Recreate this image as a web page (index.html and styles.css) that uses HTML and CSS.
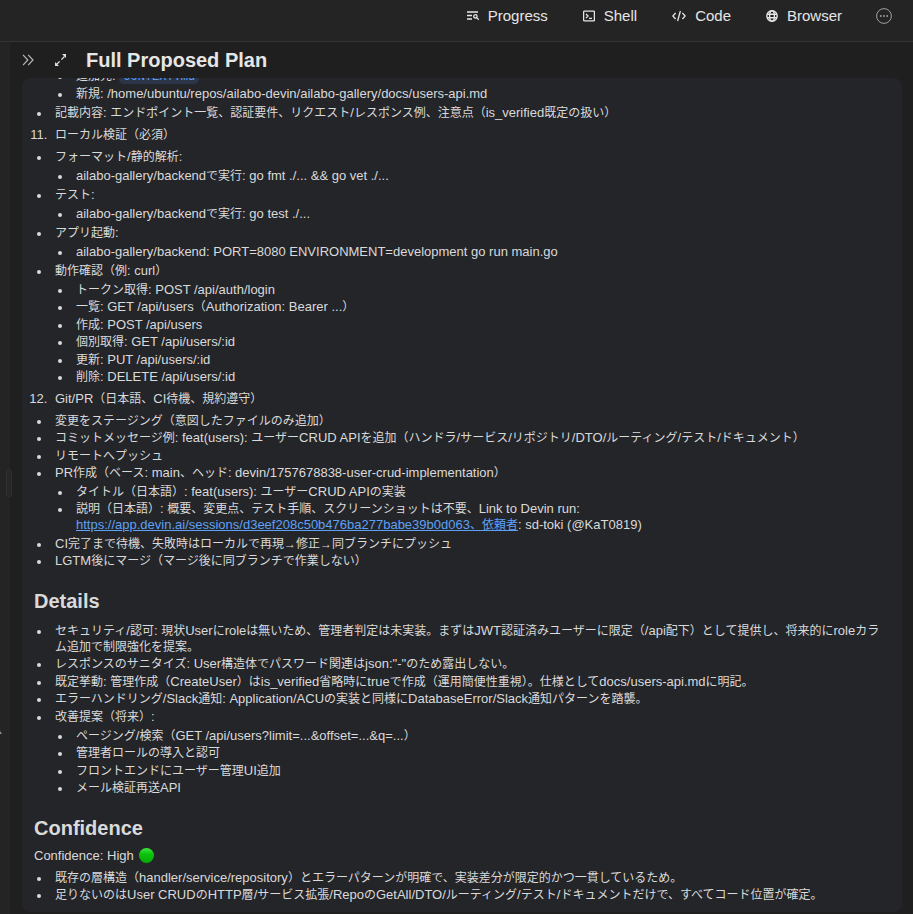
FILE: index.html
```
<!DOCTYPE html>
<html lang="ja">
<head>
<meta charset="utf-8">
<meta name="viewport" content="width=device-width, initial-scale=1">
<title>Full Proposed Plan</title>
<link rel="stylesheet" href="styles.css">
</head>
<body>
<header class="topbar">
  <nav class="tabs">
    <button class="tab" type="button">
      <svg class="icon" viewBox="0 0 12 12" fill="none" stroke="currentColor" stroke-width="1.3"><path d="M0 2H11M0 5.5H5M0 9H5"/><circle cx="8.4" cy="6.3" r="1.7"/><path d="M9.6 7.6 11.8 9.8"/></svg>
      Progress
    </button>
    <button class="tab" type="button">
      <svg class="icon" viewBox="0 0 12 12" fill="none" stroke="currentColor" stroke-width="1.3"><rect x=".6" y="1.2" width="10.8" height="9.6" rx=".6"/><path d="M3 4 5 6 3 8M6 8.3H9"/></svg>
      Shell
    </button>
    <button class="tab" type="button">
      <svg class="icon wide" viewBox="0 0 14 12" fill="none" stroke="currentColor" stroke-width="1.3"><path d="M3.6 3 .8 6 3.6 9M10.4 3 13.2 6 10.4 9M8.4 1 5.6 11"/></svg>
      Code
    </button>
    <button class="tab" type="button">
      <svg class="icon" viewBox="0 0 12 12" fill="none" stroke="currentColor" stroke-width="1.4"><circle cx="6" cy="6" r="5.2"/><ellipse cx="6" cy="6" rx="2.4" ry="5.2"/><path d="M1 4.2H11M1 7.8H11"/></svg>
      Browser
    </button>
  </nav>
  <button class="more" type="button" aria-label="More">
    <svg viewBox="0 0 16 16" fill="none" stroke="currentColor"><circle cx="8" cy="8" r="7.4"/><g fill="currentColor" stroke="none"><circle cx="4.8" cy="8" r=".9"/><circle cx="8" cy="8" r=".9"/><circle cx="11.2" cy="8" r=".9"/></g></svg>
  </button>
</header>
<div class="workspace">
  <div class="gutter">
    <span class="notch"></span>
    <span class="handle"></span>
  </div>
  <main class="panel">
    <div class="panel-head">
      <button class="tool" type="button" aria-label="Collapse">
        <svg viewBox="0 0 14 14" fill="none" stroke="currentColor" stroke-width="1.2"><path d="M1 1.8 5.8 7 1 12.2M6.2 1.8 11 7 6.2 12.2"/></svg>
      </button>
      <button class="tool expand" type="button" aria-label="Expand">
        <svg viewBox="0 0 14 14" fill="none" stroke="currentColor" stroke-width="1.3"><path d="M7.4 6.6 10.5 3.5M5.6 8.4 2.5 11.5"/><path fill="currentColor" stroke="none" d="M8 1H12V5ZM1 9V13H5Z"/></svg>
      </button>
      <h1>Full Proposed Plan</h1>
    </div>
    <div class="card">
      <article class="plan">
        <ul>
          <li class="nest">
            <ul>
              <li>追加先<span lang="en">: </span><code>CONTEXT.md</code></li>
              <li>新規<span lang="en">: /home/ubuntu/repos/ailabo-devin/ailabo-gallery/docs/users-api.md</span></li>
            </ul>
          </li>
          <li>記載内容<span lang="en">: </span>エンドポイント一覧、認証要件、リクエスト<span lang="en">/</span>レスポンス例、注意点（<span lang="en">is_verified</span>既定の扱い）</li>
        </ul>
        <ol start="11"><li>ローカル検証（必須）</li></ol>
        <ul>
          <li>フォーマット<span lang="en">/</span>静的解析<span lang="en">:</span>
            <ul><li><span lang="en">ailabo-gallery/backend</span>で実行<span lang="en">: go fmt ./... &amp;&amp; go vet ./...</span></li></ul>
          </li>
          <li>テスト<span lang="en">:</span>
            <ul><li><span lang="en">ailabo-gallery/backend</span>で実行<span lang="en">: go test ./...</span></li></ul>
          </li>
          <li>アプリ起動<span lang="en">:</span>
            <ul><li><span lang="en">ailabo-gallery/backend: PORT=8080 ENVIRONMENT=development go run main.go</span></li></ul>
          </li>
          <li>動作確認（例<span lang="en">: curl</span>）
            <ul>
              <li>トークン取得<span lang="en">: POST /api/auth/login</span></li>
              <li>一覧<span lang="en">: GET /api/users</span>（<span lang="en">Authorization: Bearer ...</span>）</li>
              <li>作成<span lang="en">: POST /api/users</span></li>
              <li>個別取得<span lang="en">: GET /api/users/:id</span></li>
              <li>更新<span lang="en">: PUT /api/users/:id</span></li>
              <li>削除<span lang="en">: DELETE /api/users/:id</span></li>
            </ul>
          </li>
        </ul>
        <ol start="12"><li><span lang="en">Git/PR</span>（日本語、<span lang="en">CI</span>待機、規約遵守）</li></ol>
        <ul>
          <li>変更をステージング（意図したファイルのみ追加）</li>
          <li>コミットメッセージ例<span lang="en">: feat(users): </span>ユーザー<span lang="en">CRUD API</span>を追加（ハンドラ<span lang="en">/</span>サービス<span lang="en">/</span>リポジトリ<span lang="en">/DTO/</span>ルーティング<span lang="en">/</span>テスト<span lang="en">/</span>ドキュメント）</li>
          <li>リモートへプッシュ</li>
          <li><span lang="en">PR</span>作成（ベース<span lang="en">: main</span>、ヘッド<span lang="en">: devin/1757678838-user-crud-implementation</span>）
            <ul>
              <li>タイトル（日本語）<span lang="en">: feat(users): </span>ユーザー<span lang="en">CRUD API</span>の実装</li>
              <li>説明（日本語）<span lang="en">: </span>概要、変更点、テスト手順、スクリーンショットは不要、<span lang="en">Link to Devin run: </span><a href="https://app.devin.ai/sessions/d3eef208c50b476ba277babe39b0d063"><span lang="en">https://app.devin.ai/sessions/d3eef208c50b476ba277babe39b0d063</span>、依頼者</a><span lang="en">: sd-toki (@KaT0819)</span></li>
            </ul>
          </li>
          <li><span lang="en">CI</span>完了まで待機、失敗時はローカルで再現→修正→同ブランチにプッシュ</li>
          <li><span lang="en">LGTM</span>後にマージ（マージ後に同ブランチで作業しない）</li>
        </ul>
        <h2>Details</h2>
        <ul>
          <li>セキュリティ<span lang="en">/</span>認可<span lang="en">: </span>現状<span lang="en">User</span>に<span lang="en">role</span>は無いため、管理者判定は未実装。まずは<span lang="en">JWT</span>認証済みユーザーに限定（<span lang="en">/api</span>配下）として提供し、将来的に<span lang="en">role</span>カラム追加で制限強化を提案。</li>
          <li>レスポンスのサニタイズ<span lang="en">: User</span>構造体でパスワード関連は<span lang="en">json:"-"</span>のため露出しない。</li>
          <li>既定挙動<span lang="en">: </span>管理作成（<span lang="en">CreateUser</span>）は<span lang="en">is_verified</span>省略時に<span lang="en">true</span>で作成（運用簡便性重視）。仕様として<span lang="en">docs/users-api.md</span>に明記。</li>
          <li>エラーハンドリング<span lang="en">/Slack</span>通知<span lang="en">: Application/ACU</span>の実装と同様に<span lang="en">DatabaseError/Slack</span>通知パターンを踏襲。</li>
          <li>改善提案（将来）<span lang="en">:</span>
            <ul>
              <li>ページング<span lang="en">/</span>検索（<span lang="en">GET /api/users?limit=...&amp;offset=...&amp;q=...</span>）</li>
              <li>管理者ロールの導入と認可</li>
              <li>フロントエンドにユーザー管理<span lang="en">UI</span>追加</li>
              <li>メール検証再送<span lang="en">API</span></li>
            </ul>
          </li>
        </ul>
        <h2>Confidence</h2>
        <p><span lang="en">Confidence: High </span><span class="status" role="img" aria-label="green"></span></p>
        <ul>
          <li>既存の層構造（<span lang="en">handler/service/repository</span>）とエラーパターンが明確で、実装差分が限定的かつ一貫しているため。</li>
          <li>足りないのは<span lang="en">User CRUD</span>の<span lang="en">HTTP</span>層<span lang="en">/</span>サービス拡張<span lang="en">/Repo</span>の<span lang="en">GetAll/DTO/</span>ルーティング<span lang="en">/</span>テスト<span lang="en">/</span>ドキュメントだけで、すべてコード位置が確定。</li>
        </ul>
      </article>
    </div>
  </main>
</div>
</body>
</html>
```
FILE: styles.css
```
* { box-sizing: border-box; }

body {
  margin: 0;
  height: 100vh;
  display: flex;
  flex-direction: column;
  overflow: hidden;
  background: #1f1f1f;
  color: #dadada;
  font: 12px/16px "Liberation Sans", "Noto Sans CJK JP", sans-serif;
}

[lang="en"] {
  font-size: 13px;
  line-height: 12px;
}

button {
  border: 0;
  padding: 0;
  background: none;
  color: inherit;
  font: inherit;
  cursor: pointer;
}

svg { display: block; }

.topbar {
  flex: none;
  display: flex;
  justify-content: flex-end;
  align-items: center;
  gap: 34px;
  height: 42px;
  padding: 0 21px 10px 0;
  background: #242424;
  border-bottom: 1px solid #353535;
}

.tabs { display: flex; gap: 35px; }

.tab {
  display: flex;
  align-items: center;
  gap: 9px;
  font-size: 15px;
  line-height: 20px;
  color: #e6e6e6;
}

.icon { width: 12px; height: 12px; }
.icon.wide { width: 14px; }

.more { color: #a0a0a0; }
.more svg { width: 16px; height: 16px; }

.workspace { flex: 1; min-height: 0; display: flex; }

.gutter {
  position: relative;
  flex: none;
  width: 10px;
  background: #242424;
}

.handle {
  position: absolute;
  right: -2px;
  top: 427px;
  width: 6px;
  height: 28px;
  border: 1px solid #303030;
  border-radius: 3px;
  background: #272727;
}

.notch {
  position: absolute;
  left: 0;
  top: 689px;
  border-left: 2px solid #8a9490;
  border-top: 3px solid transparent;
}

.panel {
  flex: 1;
  min-width: 0;
  display: flex;
  flex-direction: column;
  padding: 0 11px 2px 12px;
}

.panel-head {
  flex: none;
  display: flex;
  align-items: center;
  gap: 18px;
  height: 36px;
}

.tool { color: #b8b8b8; }
.tool svg { width: 14px; height: 14px; }
.expand { color: #e0e0e0; }

h1, h2 {
  margin: 0;
  font-weight: 700;
  font-size: 20px;
  line-height: 24px;
}

h1 { color: #e6e6e6; }

.card {
  flex: 1;
  min-height: 0;
  overflow: hidden;
  padding: 0 12px;
  border-radius: 8px;
  background: #242529;
}

.plan { margin-top: -13px; }

ul, ol { margin: 0; padding-left: 17px; }
ol { margin: 6px 0; }
li { margin-top: 1px; padding-left: 4px; }
li:nth-child(odd) { margin-top: 2px; }
ul > li:first-child, ol > li { margin-top: 0; }
li ul { margin: 3px 0; list-style: disc; }
.nest { list-style: none; }

ol > li::marker { font-size: 13px; }

code {
  padding: 0 4px;
  border-radius: 5px;
  background: #2b3547;
  color: #5c9dff;
  font: 12px/16px "Liberation Mono", monospace;
}

a { color: #5ea1f5; word-break: keep-all; }

h2 { margin: 20px 0 8px; }
h2 + ul { padding-top: 2px; }
p { margin: 0 0 6px; }

.status {
  display: inline-block;
  width: 15px;
  height: 15px;
  margin-left: 2px;
  vertical-align: -3px;
  border-radius: 50%;
  background: linear-gradient(#3fe83f, #0cc40c 40%, #06a806);
}
```
